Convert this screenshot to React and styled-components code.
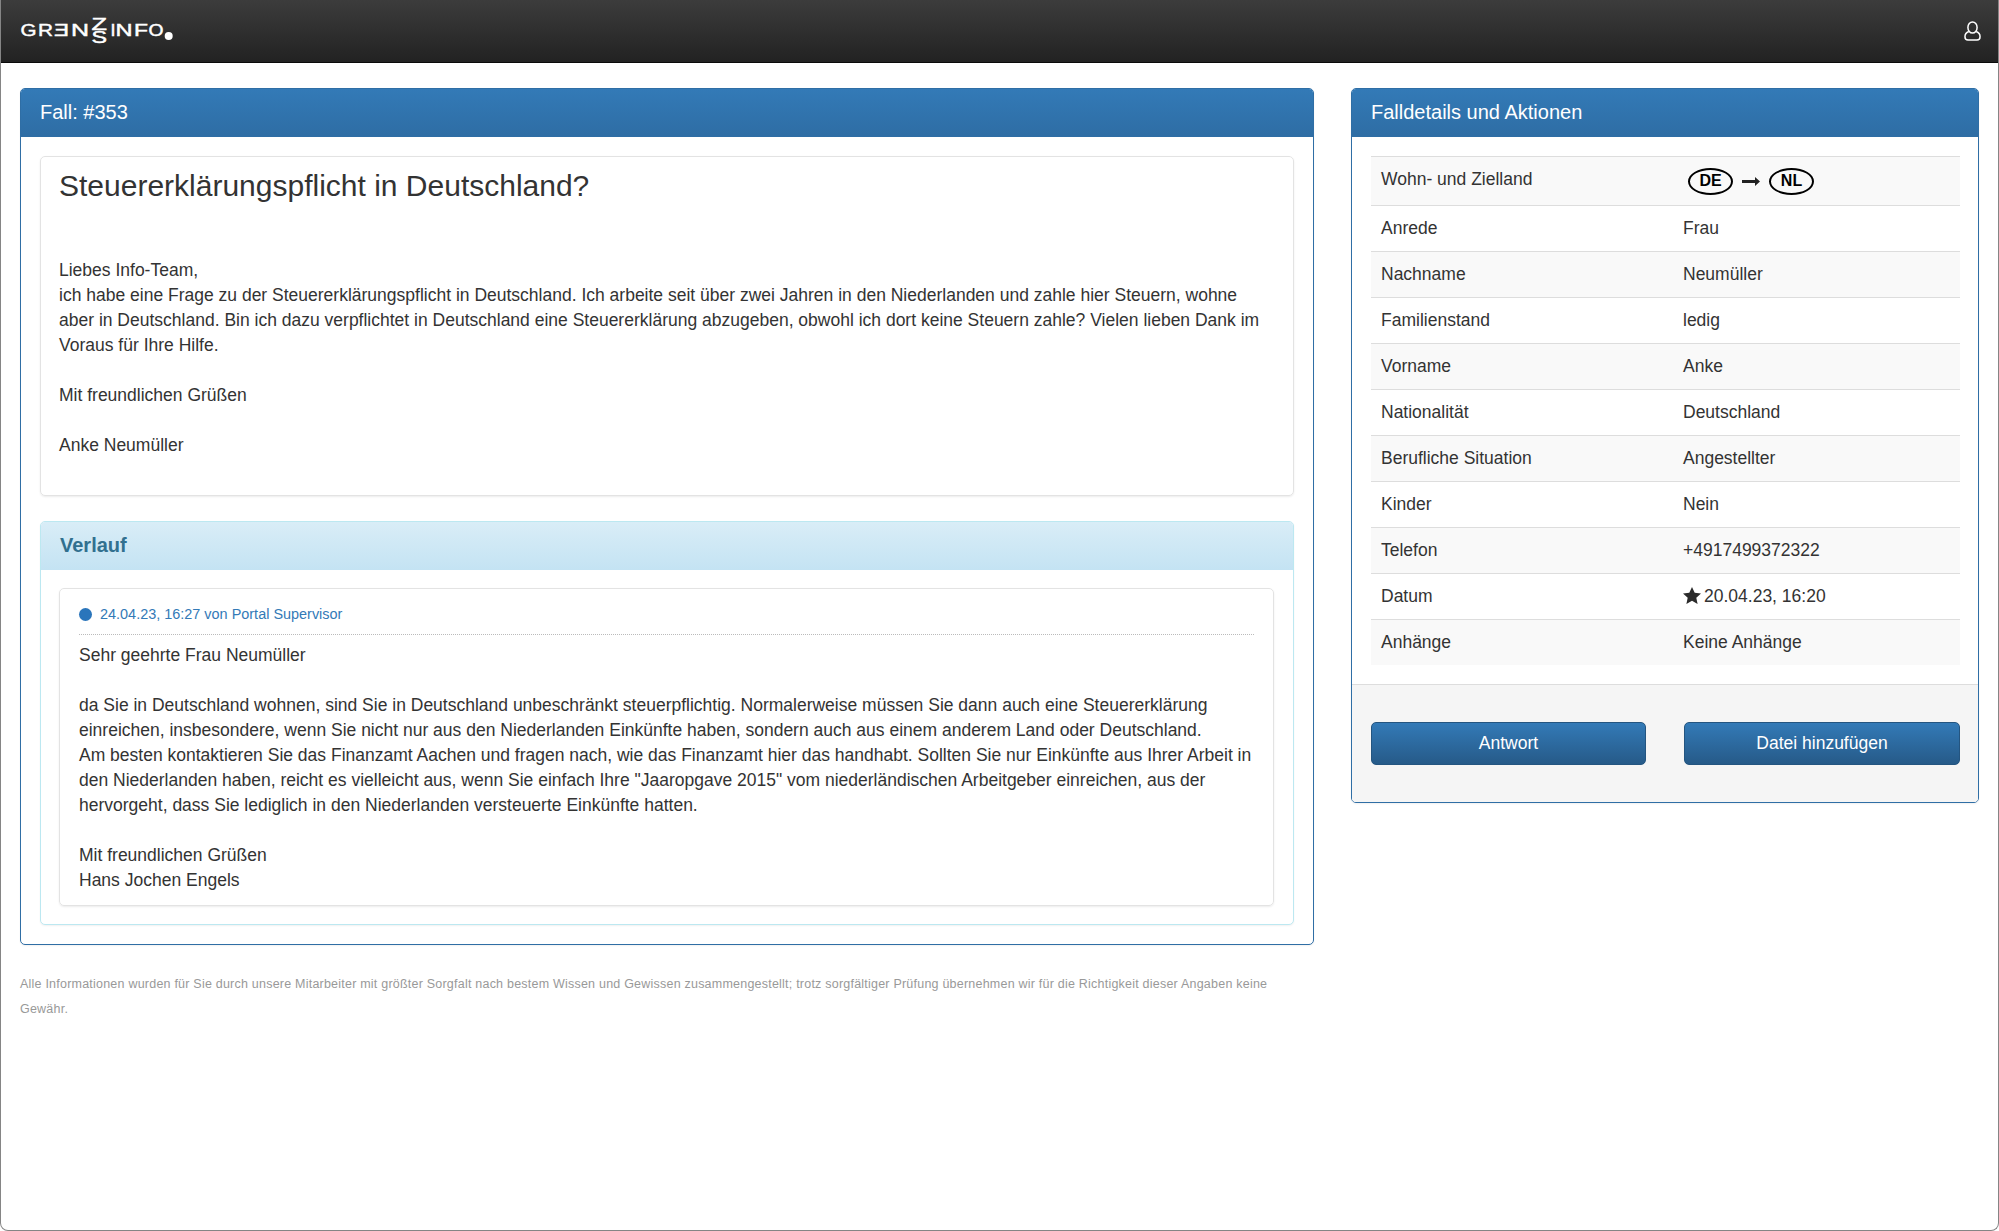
import React from "react";
import styled, { createGlobalStyle } from "styled-components";

const Global = createGlobalStyle`
  html, body { margin: 0; padding: 0; background: #fff; }
  body { font-family: "Liberation Sans", Arial, sans-serif; font-size: 17.5px; line-height: 25px; color: #333; }
  * { box-sizing: border-box; }
`;

const Frame = styled.div`
  height: 1231px;
  overflow: hidden;
  border: 1px solid #858585;
  border-top: 0;
  border-radius: 0 0 8px 8px;
`;
const TopBar = styled.header`
  height: 63px;
  margin: 0 -1px;
  padding: 0 18px 0 21px;
  display: flex;
  align-items: center;
  justify-content: space-between;
  background: linear-gradient(#3c3c3c, #222);
  border-bottom: 1px solid #0a0a0a;
`;
const LogoSvg = styled.svg`
  display: block;
  width: 154px;
  height: 30px;
  margin-top: 1px;
  overflow: visible;
`;
const Content = styled.main`
  display: grid;
  grid-template-columns: 1294px 628px;
  column-gap: 37px;
  padding: 25px 19px 0;
  align-items: start;
`;
const Column = styled.div`
  min-width: 0;
`;
const Panel = styled.section`
  background: #fff;
  border: 1px solid ${(p) => (p.$info ? "#bce8f1" : "#2f6ea5")};
  border-radius: 5px;
  box-shadow: 0 1px 2px rgba(0, 0, 0, 0.06);
  overflow: hidden;
`;
const PanelHead = styled.h2`
  margin: 0;
  height: 48px;
  padding: 0 19px 2px;
  display: flex;
  align-items: center;
  font-size: 20px;
  font-weight: ${(p) => (p.$info ? 700 : 400)};
  color: ${(p) => (p.$info ? "#31708f" : "#fff")};
  background: ${(p) =>
    p.$info ? "linear-gradient(#d9edf7, #c4e3f3)" : "linear-gradient(#337ab7, #2e6da4)"};
`;
const PanelBody = styled.div`
  padding: ${(p) => p.$padding || "19px"};
`;
const Well = styled.article`
  border: 1px solid #e3e3e3;
  border-radius: 5px;
  box-shadow: 0 1px 2px rgba(0, 0, 0, 0.08);
  padding: 12px 18px 19px;
  margin-bottom: 25px;
  height: 340px;
`;
const Title = styled.h3`
  margin: 0 0 56px;
  font-size: 30px;
  line-height: 33px;
  font-weight: 400;
`;
const Message = styled.p`
  margin: 0;
`;
const PostCard = styled.article`
  border: 1px solid #e3e3e3;
  border-radius: 5px;
  box-shadow: 0 1px 2px rgba(0, 0, 0, 0.08);
  padding: 13px 19px 12px;
`;
const Meta = styled.div`
  display: flex;
  align-items: center;
  gap: 8px;
  padding-bottom: 7px;
  margin-bottom: 8px;
  border-bottom: 1px dotted #bbb;
  color: #337ab7;
  font-size: 14.45px;
  line-height: 25px;
`;
const Dot = styled.span`
  width: 13px;
  height: 13px;
  border-radius: 50%;
  background: #2a75bb;
`;
const Disclaimer = styled.p`
  margin: 27px 0 0;
  color: #999;
  font-size: 12.5px;
  line-height: 25px;
  letter-spacing: 0.22px;
`;
const Rows = styled.div`
  display: grid;
  grid-template-columns: 302px 1fr;
`;
const Row = styled.div`
  display: grid;
  grid-template-columns: subgrid;
  grid-column: 1 / -1;
  border-top: 1px solid #ddd;
  background: ${(p) => (p.$striped ? "#f9f9f9" : "#fff")};
  min-height: ${(p) => (p.$tall ? "49px" : "46px")};
  align-items: center;
`;
const Cell = styled.div`
  padding: 0 10px ${(p) => (p.$lifted ? "3px" : "0")};
`;
const Route = styled.div`
  display: flex;
  align-items: center;
  gap: 9px;
  padding-left: 5px;
`;
const Plate = styled.span`
  width: 45px;
  height: 27px;
  border: 2px solid #000;
  border-radius: 50%;
  display: flex;
  align-items: center;
  justify-content: center;
  color: #000;
  font-weight: 700;
  font-size: 16px;
  line-height: 1;
`;
const DateValue = styled.span`
  display: inline-flex;
  align-items: center;
  gap: 3px;
  padding-top: 2px;
`;
const Star = styled.svg`
  margin-top: -3px;
`;
const PanelFoot = styled.div`
  display: grid;
  grid-template-columns: 275px 276px;
  justify-content: space-between;
  padding: 37px 18px 37px 19px;
  background: #f5f5f5;
  border-top: 1px solid #ddd;
`;
const Button = styled.button`
  height: 43px;
  border: 1px solid #245580;
  border-radius: 5px;
  background: linear-gradient(#337ab7, #265a88);
  color: #fff;
  font: inherit;
  padding: 0;
`;

const Logo = () => (
  <LogoSvg viewBox="0 0 154 30" aria-label="GrenzInfo">
    <g fill="#fff" stroke="#fff" strokeWidth="0.45" fontFamily="Liberation Sans, sans-serif" fontSize="16.5">
      <text x="-0.5" y="18.5" textLength="16" lengthAdjust="spacingAndGlyphs">G</text>
      <text x="17" y="18.5" textLength="15" lengthAdjust="spacingAndGlyphs">R</text>
      <text x="-48" y="18.5" textLength="15" lengthAdjust="spacingAndGlyphs" transform="scale(-1 1)">E</text>
      <text x="50" y="18.5" textLength="18" lengthAdjust="spacingAndGlyphs">N</text>
      <text x="70.5" y="13" textLength="15.5" lengthAdjust="spacingAndGlyphs">Z</text>
      <text x="70.5" y="26" textLength="15.5" lengthAdjust="spacingAndGlyphs">S</text>
      <text x="89.5" y="18.5" textLength="5" lengthAdjust="spacingAndGlyphs">I</text>
      <text x="94.5" y="18.5" textLength="17" lengthAdjust="spacingAndGlyphs">N</text>
      <text x="113" y="18.5" textLength="14" lengthAdjust="spacingAndGlyphs">F</text>
      <text x="127.5" y="18.5" textLength="15" lengthAdjust="spacingAndGlyphs">O</text>
    </g>
    <circle cx="147.700" cy="19" r="4" fill="#fff" />
  </LogoSvg>
);

const UserIcon = () => (
  <svg width="17" height="20" viewBox="0 0 17 20" fill="none" stroke="#fff" strokeWidth="1.5" aria-label="Benutzer">
    <ellipse cx="8.5" cy="6.5" rx="4.6" ry="5.6" />
    <path d="M4.8 10.5C2.6 11.4 1 13 1 15.3V16c0 1.7 1.2 3 3 3h9c1.8 0 3-1.3 3-3v-.7c0-2.300-1.600-3.900-3.800-4.800" />
  </svg>
);

const Arrow = () => (
  <svg width="18" height="9" viewBox="0 0 18 9" aria-hidden="true">
    <path d="M0 3h13V0l5 4.500-5 4.500V6H0z" fill="#222" />
  </svg>
);

const StarIcon = () => (
  <Star width="18" height="17" viewBox="0 0 18 17" aria-hidden="true">
    <path d="M9 0l2.700 5.800 6.300.7-4.700 4.200 1.300 6.300L9 13.800 3.400 17l1.300-6.300L0 6.500l6.300-.7z" fill="#2b2b2b" />
  </Star>
);

const details = [
  ["Anrede", "Frau"],
  ["Nachname", "Neumüller"],
  ["Familienstand", "ledig"],
  ["Vorname", "Anke"],
  ["Nationalität", "Deutschland"],
  ["Berufliche Situation", "Angestellter"],
  ["Kinder", "Nein"],
  ["Telefon", "+4917499372322"],
];

export default function App() {
  return (
    <Frame>
      <Global />
      <TopBar>
        <Logo />
        <UserIcon />
      </TopBar>
      <Content>
        <Column>
          <Panel>
            <PanelHead>Fall: #353</PanelHead>
            <PanelBody>
              <Well>
                <Title>Steuererklärungspflicht in Deutschland?</Title>
                <Message>
                  Liebes Info-Team,
                  <br />
                  ich habe eine Frage zu der Steuererklärungspflicht in Deutschland. Ich arbeite seit über zwei Jahren in den Niederlanden und zahle hier Steuern, wohne aber in Deutschland. Bin ich dazu verpflichtet in Deutschland eine Steuererklärung abzugeben, obwohl ich dort keine Steuern zahle? Vielen lieben Dank im Voraus für Ihre Hilfe.
                  <br />
                  <br />
                  Mit freundlichen Grüßen
                  <br />
                  <br />
                  Anke Neumüller
                </Message>
              </Well>
              <Panel $info>
                <PanelHead $info>Verlauf</PanelHead>
                <PanelBody $padding="18px 19px 18px 18px">
                  <PostCard>
                    <Meta>
                      <Dot />
                      24.04.23, 16:27 von Portal Supervisor
                    </Meta>
                    <Message>
                      Sehr geehrte Frau Neumüller
                      <br />
                      <br />
                      da Sie in Deutschland wohnen, sind Sie in Deutschland unbeschränkt steuerpflichtig. Normalerweise müssen Sie dann auch eine Steuererklärung einreichen, insbesondere, wenn Sie nicht nur aus den Niederlanden Einkünfte haben, sondern auch aus einem anderem Land oder Deutschland.
                      <br />
                      Am besten kontaktieren Sie das Finanzamt Aachen und fragen nach, wie das Finanzamt hier das handhabt. Sollten Sie nur Einkünfte aus Ihrer Arbeit in den Niederlanden haben, reicht es vielleicht aus, wenn Sie einfach Ihre "Jaaropgave 2015" vom niederländischen Arbeitgeber einreichen, aus der hervorgeht, dass Sie lediglich in den Niederlanden versteuerte Einkünfte hatten.
                      <br />
                      <br />
                      Mit freundlichen Grüßen
                      <br />
                      Hans Jochen Engels
                    </Message>
                  </PostCard>
                </PanelBody>
              </Panel>
            </PanelBody>
          </Panel>
          <Disclaimer>
            Alle Informationen wurden für Sie durch unsere Mitarbeiter mit größter Sorgfalt nach bestem Wissen und Gewissen zusammengestellt; trotz sorgfältiger Prüfung übernehmen wir für die Richtigkeit dieser Angaben keine Gewähr.
          </Disclaimer>
        </Column>
        <Column>
          <Panel>
            <PanelHead>Falldetails und Aktionen</PanelHead>
            <PanelBody $padding="19px 18px 19px 19px">
              <Rows>
                <Row $striped $tall>
                  <Cell $lifted>Wohn- und Zielland</Cell>
                  <Cell>
                    <Route>
                      <Plate>DE</Plate>
                      <Arrow />
                      <Plate>NL</Plate>
                    </Route>
                  </Cell>
                </Row>
                {details.map(([label, value], i) => (
                  <Row key={label} $striped={i % 2 === 1}>
                    <Cell>{label}</Cell>
                    <Cell>{value}</Cell>
                  </Row>
                ))}
                <Row>
                  <Cell>Datum</Cell>
                  <Cell>
                    <DateValue>
                      <StarIcon />
                      20.04.23, 16:20
                    </DateValue>
                  </Cell>
                </Row>
                <Row $striped>
                  <Cell>Anhänge</Cell>
                  <Cell>Keine Anhänge</Cell>
                </Row>
              </Rows>
            </PanelBody>
            <PanelFoot>
              <Button>Antwort</Button>
              <Button>Datei hinzufügen</Button>
            </PanelFoot>
          </Panel>
        </Column>
      </Content>
    </Frame>
  );
}
